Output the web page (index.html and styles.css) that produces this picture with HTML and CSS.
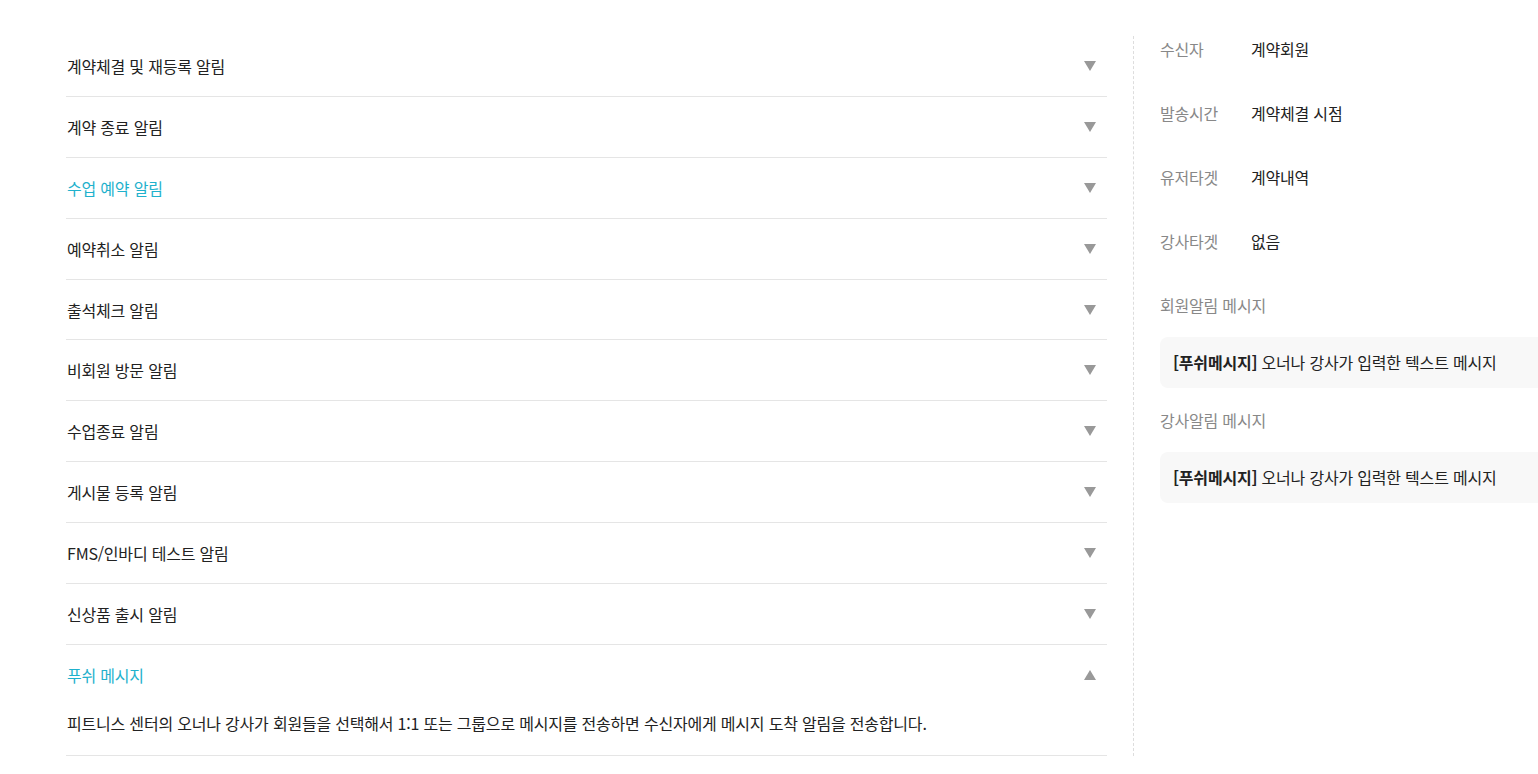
FILE: index.html
```html
<!DOCTYPE html>
<html lang="ko">
<head>
  <meta charset="utf-8">
  <title>알림 설정</title>
  <link rel="stylesheet" href="styles.css">
</head>
<body>
  <div class="page">
    <ul class="notice-list">
      <li class="notice-item"><div class="notice-head"><span>계약체결 및 재등록 알림</span><i class="arrow"></i></div></li>
      <li class="notice-item"><div class="notice-head"><span>계약 종료 알림</span><i class="arrow"></i></div></li>
      <li class="notice-item active"><div class="notice-head"><span>수업 예약 알림</span><i class="arrow"></i></div></li>
      <li class="notice-item"><div class="notice-head"><span>예약취소 알림</span><i class="arrow"></i></div></li>
      <li class="notice-item"><div class="notice-head"><span>출석체크 알림</span><i class="arrow"></i></div></li>
      <li class="notice-item"><div class="notice-head"><span>비회원 방문 알림</span><i class="arrow"></i></div></li>
      <li class="notice-item"><div class="notice-head"><span>수업종료 알림</span><i class="arrow"></i></div></li>
      <li class="notice-item"><div class="notice-head"><span>게시물 등록 알림</span><i class="arrow"></i></div></li>
      <li class="notice-item"><div class="notice-head"><span>FMS/인바디 테스트 알림</span><i class="arrow"></i></div></li>
      <li class="notice-item"><div class="notice-head"><span>신상품 출시 알림</span><i class="arrow"></i></div></li>
      <li class="notice-item active open">
        <div class="notice-head"><span>푸쉬 메시지</span><i class="arrow up"></i></div>
        <p class="notice-desc">피트니스 센터의 오너나 강사가 회원들을 선택해서 1:1 또는 그룹으로 메시지를 전송하면 수신자에게 메시지 도착 알림을 전송합니다.</p>
      </li>
    </ul>

    <div class="divider"></div>

    <div class="detail">
      <dl class="info-row"><dt>수신자</dt><dd>계약회원</dd></dl>
      <dl class="info-row"><dt>발송시간</dt><dd>계약체결 시점</dd></dl>
      <dl class="info-row"><dt>유저타겟</dt><dd>계약내역</dd></dl>
      <dl class="info-row"><dt>강사타겟</dt><dd>없음</dd></dl>

      <h4 class="msg-title">회원알림 메시지</h4>
      <div class="msg-box"><b>[푸쉬메시지]</b> 오너나 강사가 입력한 텍스트 메시지</div>

      <h4 class="msg-title">강사알림 메시지</h4>
      <div class="msg-box"><b>[푸쉬메시지]</b> 오너나 강사가 입력한 텍스트 메시지</div>
    </div>
  </div>
</body>
</html>
```

FILE: styles.css
```css
html, body {
  margin: 0;
  padding: 0;
  background: #fff;
  overflow: hidden;
}
body {
  font-family: "Noto Sans CJK KR", "Noto Sans", sans-serif;
  font-size: 16px;
  line-height: 24px;
  letter-spacing: -0.2px;
  color: #222;
}
.page {
  display: flex;
  align-items: stretch;
  padding: 36px 0 0 66px;
  width: max-content;
}
.notice-list {
  list-style: none;
  margin: 0;
  padding: 0;
  width: 1041px;
  flex-shrink: 0;
}
.notice-item {
  border-bottom: 1px solid #e5e5e5;
}
.notice-head {
  display: flex;
  align-items: center;
  justify-content: space-between;
  height: 59.9px;
  padding: 0 11px 0 1px;
}
.notice-item.active .notice-head {
  color: #1fb1cc;
}
.arrow {
  display: block;
  width: 0;
  height: 0;
  border-left: 6.5px solid transparent;
  border-right: 6.5px solid transparent;
  border-top: 10px solid #999;
}
.arrow.up {
  border-top: none;
  border-bottom: 10px solid #999;
}
.notice-desc {
  margin: 0;
  padding: 6px 0 20px 1px;
}
.divider {
  border-left: 1px dashed #ddd;
  margin: 0 26px 0 26px;
}
.detail {
  width: 420px;
  flex-shrink: 0;
  padding-top: 1px;
}
.info-row {
  display: flex;
  margin: 0 0 40px 0;
}
.info-row dt {
  width: 91px;
  color: #888;
}
.info-row dd {
  margin: 0;
}
.msg-title {
  margin: 0 0 20px 0;
  font-size: 16px;
  font-weight: 400;
  color: #888;
}
.msg-box {
  background: #f8f8f8;
  border-radius: 8px;
  padding: 13px 13px;
  line-height: 25px;
  margin-bottom: 20px;
}
.msg-box b {
  font-weight: 700;
}
```
